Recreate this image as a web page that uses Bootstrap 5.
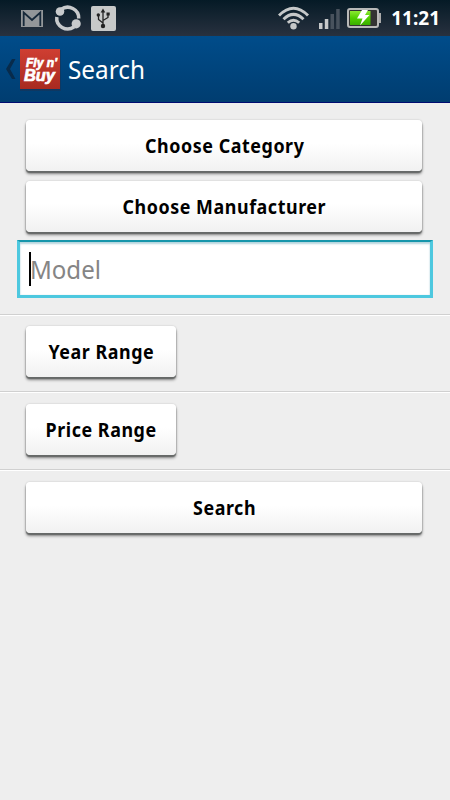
<!DOCTYPE html>
<html lang="en">
<head>
<meta charset="utf-8">
<meta name="viewport" content="width=device-width, initial-scale=1">
<title>Search</title>
<link href="https://cdn.jsdelivr.net/npm/bootstrap@5.3.0/dist/css/bootstrap.min.css" rel="stylesheet">
<style>
body{background:#eee;font-family:"Noto Sans","Open Sans",sans-serif;min-height:100vh}
.status-strip{height:36px;background:linear-gradient(#051a26,#28313f);padding:0 10px 0 20px;color:#fff}
.clock{font-weight:700;font-size:19px;line-height:36px;width:50px}
.squeeze{display:inline-block;white-space:nowrap;transform-origin:center}
.from-left{transform-origin:left center}
.app-head{height:67px;background:linear-gradient(#004c8a,#003d70);border-bottom:1px solid #000c70;padding:0 0 0 5px}
.app-title{font-size:26px;line-height:66px;color:#fff;margin-left:7px;transform:scaleX(.935)}
.key{height:51px;border:0;border-radius:4px;background:linear-gradient(#fff 0,#fff 45%,#f1f1f1 100%);box-shadow:0 2px 1px #666968,0 3px 3px rgba(0,0,0,.45),0 0 2px rgba(0,0,0,.2);color:#000;font-size:19px;font-weight:700;line-height:53px;padding:0 0 0 1px}
.key .squeeze{transform:scaleX(.94);letter-spacing:.6px}
.key:hover{color:#000;background:linear-gradient(#fff 45%,#f1f1f1)}
.key-half{width:150px}
.inset-row{padding:0 28px 0 26px}
.model-box{height:58px;margin:8px 17px 16px;background:#fff;border:3px solid #4dc8df;border-top:2px solid #1696ab;box-shadow:inset 0 2px 2px #b5d5de,inset 0 0 1px #a6c9d2;padding-left:9px}
.caret{width:2px;height:34px;background:#000}
.hint{font-size:26px;line-height:52px;color:#858585;margin-left:-1px;transform:scaleX(.925)}
.rule{height:2px;background:#fff;border-top:1px solid #d0d0d0}
</style>
</head>
<body>
<header class="status-strip d-flex align-items-center">
  <svg width="24" height="19" viewBox="0 0 24 19"><path fill="#939699" d="M1 1h22v17H1z"/><path fill="none" stroke="#17293a" stroke-width="1.800" d="M3.700 17V3.500L12 11l8.300-7.500V17"/></svg>
  <svg class="ms-2" width="32" height="30" viewBox="0 0 32 30"><g fill="none" stroke="#c8cacc" stroke-width="3.500"><path d="M9 6.500A11 10.700 0 0 1 26.700 15.500"/><path d="M4.800 14A11 10.700 0 0 0 22 24"/></g><circle cx="8" cy="8.500" r="4.300" fill="#c8cacc"/><circle cx="24.200" cy="20.800" r="4.600" fill="#c8cacc"/></svg>
  <svg style="margin-left:7px" width="25" height="25" viewBox="0 0 25 25"><rect width="25" height="25" rx="2" fill="#c7c9c9"/><g fill="none" stroke="#222" stroke-width="1.300"><path d="M12 20V5M12 17L7.500 13.500V9M12 14.500l5-3V8.500"/></g><path fill="#222" d="M12 2.500l2.300 4H9.700zM15.500 6.500h3.200v3h-3.200z"/><circle cx="7.300" cy="9" r="1.700" fill="#222"/><circle cx="12" cy="20" r="2.200" fill="#222"/></svg>
  <svg class="ms-auto" width="32" height="24" viewBox="0 0 32 24"><g fill="none" stroke="#c6c8c9" stroke-width="2.900"><path d="M1 9.500Q15.500-5 30 9.500"/><path d="M5.500 13.300Q15.500 3.500 25.500 13.300"/><path d="M9.800 16.800Q15.500 11.500 21.200 16.800"/></g><circle cx="15.500" cy="20.300" r="3.200" fill="#c6c8c9"/></svg>
  <svg style="margin-left:8px" width="22" height="21" viewBox="0 0 22 21"><path fill="#c6c8c9" d="M1 15h3.500v6H1zM6.800 11h3.500v10H6.800z"/><path fill="#48525d" d="M12.500 6H16v15h-3.500zM18.200 1h3.500v20h-3.500z"/></svg>
  <svg style="margin-left:7px;margin-right:8px" width="35" height="20" viewBox="0 0 35 20"><defs><linearGradient id="charge" x2="0" y2="1"><stop stop-color="#8be831"/><stop offset=".5" stop-color="#4fce00"/><stop offset="1" stop-color="#39ad00"/></linearGradient></defs><path fill="#aaa" d="M31 5h3v10h-3z"/><rect x="1" y="1" width="30" height="18" rx="2" fill="#333" stroke="#b9b9b9" stroke-width="2"/><path fill="url(#charge)" d="M3 3h20.500v14H3z"/><path fill="#fff" d="M15 2h6l-3 5h4.500L13 17.500l2.500-7H10z"/></svg>
  <div class="clock text-end">11:21</div>
</header>

<nav class="app-head d-flex align-items-center">
  <svg width="11" height="22" viewBox="0 0 11 22"><path fill="#082b4b" d="M7 1h3.500L5 11l5.500 10H7L1 11z"/></svg>
  <svg style="margin-left:3px" width="42" height="44" viewBox="0 0 42 44"><defs><linearGradient id="tile" x2="0" y2="1"><stop stop-color="#cf3e32"/><stop offset="1" stop-color="#a82a20"/></linearGradient></defs><path fill="#15355a" d="M1 3h41v41H1z" opacity=".7"/><path fill="url(#tile)" d="M1 2h40v40H1z"/><text fill="#fff" font-family="Liberation Sans, sans-serif" font-weight="700" font-style="italic" stroke="#fff" stroke-width=".7"><tspan x="7" y="20" font-size="12" textLength="31" lengthAdjust="spacingAndGlyphs">Fly n'</tspan><tspan x="5" y="33.500" font-size="16.500" textLength="31" lengthAdjust="spacingAndGlyphs">Buy</tspan></text></svg>
  <span class="app-title squeeze from-left">Search</span>
</nav>

<main class="pb-3">
  <div class="inset-row d-grid" style="padding-top:17px;row-gap:10px">
    <button class="btn key"><span class="squeeze">Choose Category</span></button>
    <button class="btn key"><span class="squeeze">Choose Manufacturer</span></button>
  </div>
  <div class="model-box d-flex align-items-center"><span class="caret"></span><span class="hint squeeze from-left">Model</span></div>
  <div class="rule"></div>
  <div class="inset-row d-flex" style="padding-top:10px;padding-bottom:14px"><button class="btn key key-half"><span class="squeeze">Year Range</span></button></div>
  <div class="rule"></div>
  <div class="inset-row d-flex" style="padding-top:11px;padding-bottom:14px"><button class="btn key key-half"><span class="squeeze">Price Range</span></button></div>
  <div class="rule"></div>
  <div class="inset-row d-grid" style="padding-top:11px"><button class="btn key"><span class="squeeze">Search</span></button></div>
</main>
<script src="https://cdn.jsdelivr.net/npm/bootstrap@5.3.0/dist/js/bootstrap.bundle.min.js"></script>
</body>
</html>
